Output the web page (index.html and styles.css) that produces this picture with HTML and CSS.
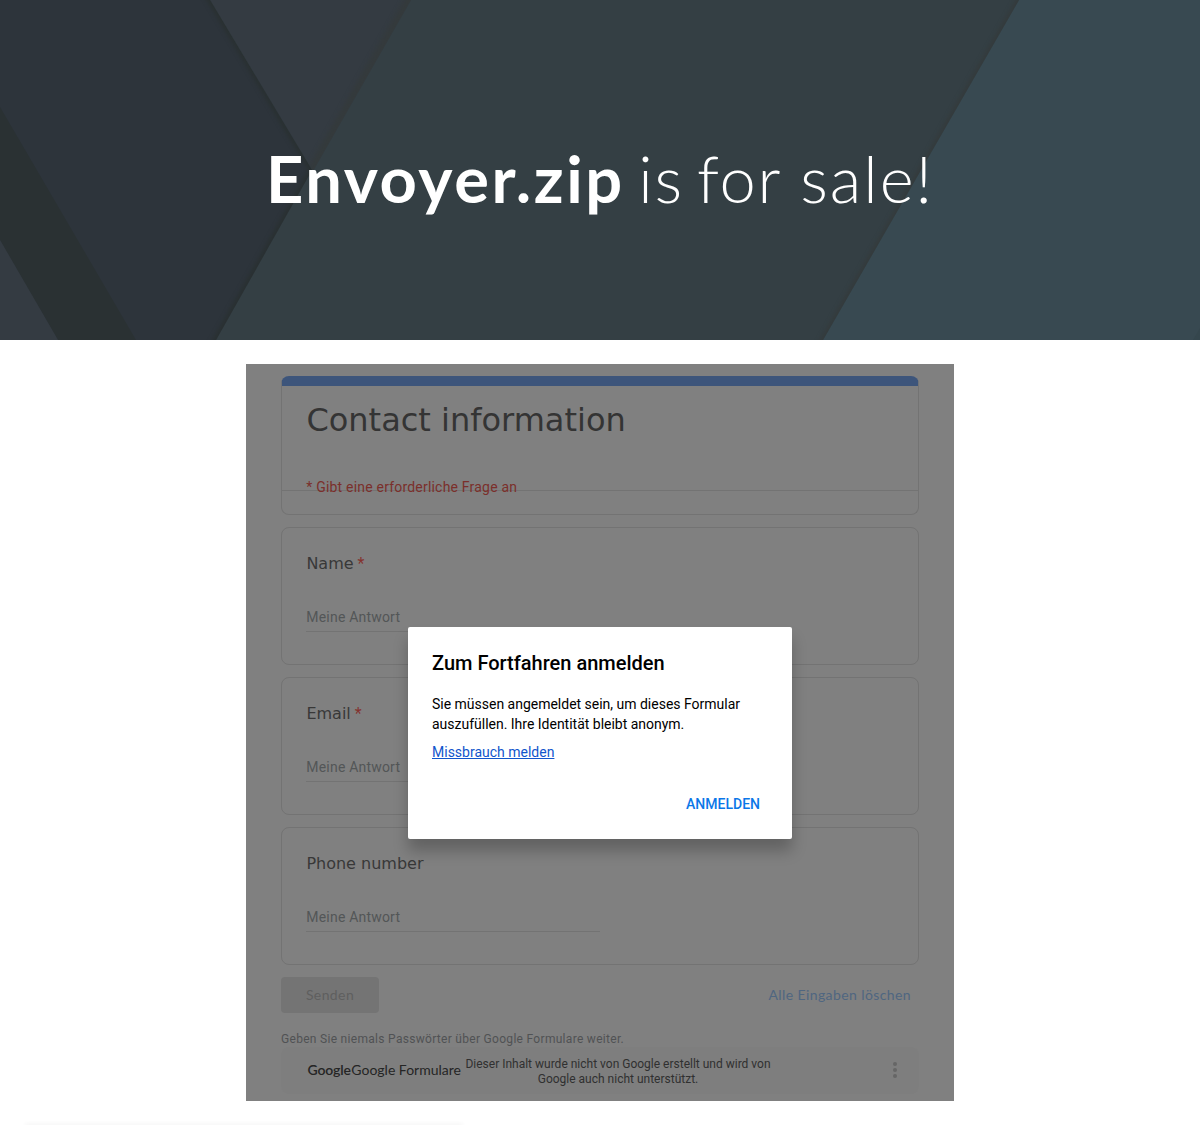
FILE: index.html
```html
<!DOCTYPE html>
<html lang="de">
<head>
<meta charset="utf-8">
<title>Envoyer.zip is for sale!</title>
<link rel="stylesheet" href="styles.css">
</head>
<body>
<header class="hero">
  <svg class="hero-art" viewBox="0 0 1200 340" preserveAspectRatio="none" aria-hidden="true">
    <defs>
      <filter id="soft" x="-20%" y="-20%" width="140%" height="140%" color-interpolation-filters="sRGB"><feGaussianBlur stdDeviation="2"/></filter>
      <clipPath id="leftclip"><path d="M0 0H210L312 170L216 340H0Z"/></clipPath>
      <clipPath id="topclip"><path d="M210 0H411L313 171Z"/></clipPath>
      <clipPath id="midclip"><path d="M411 0H1019L823 340H216Z"/></clipPath>
    </defs>
    <path fill="#343f44" d="M0 0H1200V340H0Z"/>
    <path fill="#343b42" d="M210 0H411L313 171Z"/>
    <g clip-path="url(#topclip)"><path class="edge-top" d="M415 -7L312 173"/></g>
    <path fill="#2d343b" d="M0 0H210L312 170L216 340H0Z"/>
    <g clip-path="url(#leftclip)"><path class="edge" d="M206 -7L312 170L212 347"/></g>
    <path fill="#2a3133" d="M0 107L136 340H58L0 240Z"/>
    <path fill="#343b42" d="M0 240L58 340H0Z"/>
    <path fill="#384951" d="M1019 0H1200V340H823Z"/>
    <g clip-path="url(#midclip)"><path class="edge-right" d="M1023 -7L819 347"/></g>
    <path fill="#35464d" d="M1200 328V340H1193Z"/>
  </svg>
  <h1 class="hero-title"><strong>Envoyer.zip</strong> is for <span class="hero-last">sale!</span></h1>
</header>

<main class="form-frame">
  <section class="card intro">
    <div class="intro-main">
      <h2 class="form-title">Contact information</h2>
      <p class="required-note">* Gibt eine erforderliche Frage an</p>
    </div>
  </section>
  <section class="card question">
    <h3 class="label">Name<span class="star">*</span></h3>
    <div class="answer">Meine Antwort</div>
  </section>
  <section class="card question">
    <h3 class="label">Email<span class="star">*</span></h3>
    <div class="answer">Meine Antwort</div>
  </section>
  <section class="card question">
    <h3 class="label">Phone number</h3>
    <div class="answer">Meine Antwort</div>
  </section>
  <div class="actions">
    <span class="submit">Senden</span>
    <span class="clear">Alle Eingaben löschen</span>
  </div>
  <p class="warning">Geben Sie niemals Passwörter über Google Formulare weiter.</p>
  <footer class="form-footer">
    <div class="brand"><span class="brand-google">Google</span><span class="brand-forms">Google Formulare</span></div>
    <p class="disclaimer">Dieser Inhalt wurde nicht von Google erstellt und wird von Google auch nicht unterstützt.</p>
    <svg class="more" viewBox="0 0 6 18" aria-hidden="true"><circle cx="3" cy="3" r="2"/><circle cx="3" cy="9" r="2"/><circle cx="3" cy="15" r="2"/></svg>
  </footer>
  <div class="dialog" role="dialog">
    <h2 class="dialog-title">Zum Fortfahren anmelden</h2>
    <p class="dialog-text">Sie müssen angemeldet sein, um dieses Formular auszufüllen. Ihre Identität bleibt anonym.</p>
    <a class="report">Missbrauch melden</a>
    <span class="signin">ANMELDEN</span>
  </div>
</main>
<div class="next-panel"></div>
</body>
</html>
```

FILE: styles.css
```css
* { box-sizing: border-box; }
html { overflow: hidden; }
body {
  margin: 0;
  height: 1125px;
  overflow: hidden;
  background: #fff;
  font-family: Roboto, "Liberation Sans", sans-serif;
}
h1, h2, h3, p { margin: 0; font-weight: 400; }

.hero {
  position: relative;
  display: flex;
  justify-content: center;
  height: 340px;
  padding-top: 138px;
  background: #343f44;
}
.hero-art { position: absolute; inset: 0; width: 100%; height: 100%; }
.edge, .edge-top, .edge-right { fill: none; filter: url(#soft); }
.edge { stroke: #293031; stroke-width: 6; }
.edge-top { stroke: #343a3c; stroke-width: 12; }
.edge-right { stroke: #343a3b; stroke-width: 5; }
.hero-title {
  position: relative;
  color: #fff;
  font: 300 65px/80px Lato, sans-serif;
  letter-spacing: 1.7px;
  word-spacing: -6px;
  white-space: nowrap;
}
.hero-title strong { font-weight: 700; letter-spacing: 2.6px; }
.hero-last { margin-left: 6px; letter-spacing: 2px; }

.form-frame {
  position: relative;
  width: 708px;
  height: 737px;
  margin: 24px auto 0;
  padding: 12px 35px 0;
  background: #808080;
}
.card {
  height: 138px;
  margin-bottom: 12px;
  border: 1px solid #737373;
  border-radius: 8px;
}
.intro {
  height: 139px;
  border-top: 10px solid #3d557b;
}
.intro-main {
  height: 105px;
  padding: 13px 24px 0;
  border-bottom: 1px solid #737373;
}
.form-title {
  height: 78px;
  padding-left: .4px;
  color: #343434;
  font: 32px/43px "DejaVu Sans", sans-serif;
}
.required-note {
  padding-left: .3px;
  color: #7b2f2b;
  font-size: 14px;
  line-height: 20px;
  letter-spacing: .2px;
}
.question { padding: 24px 24px 0; }
.label {
  height: 55px;
  padding-left: .4px;
  color: #383838;
  font: 16px/24px "DejaVu Sans", sans-serif;
}
.star { padding-left: 4px; color: #84332f; font-family: Roboto, sans-serif; }
.answer {
  width: 294px;
  height: 25px;
  padding-left: .3px;
  border-bottom: 1px solid #737373;
  color: #535657;
  font-size: 14px;
  line-height: 20px;
  letter-spacing: .2px;
}
.actions {
  display: flex;
  justify-content: space-between;
  align-items: center;
  height: 36px;
  padding-right: 8px;
  font: 14px/36px Lato, sans-serif;
  letter-spacing: .4px;
}
.submit {
  width: 98px;
  border-radius: 4px;
  background: #747474;
  color: #5f5f5f;
  text-align: center;
}
.clear { color: #4f6680; }
.warning {
  margin-top: 18px;
  height: 16px;
  color: #505254;
  font-size: 12px;
  line-height: 16px;
  letter-spacing: .3px;
}
.form-footer {
  display: flex;
  align-items: center;
  height: 47px;
  padding: 0 21px 0 26px;
  border-radius: 8px;
  background: #7e7e7e;
}
.brand {
  display: flex;
  width: 154px;
  padding: 0 0 2px .5px;
  color: #252525;
  font: 14px/20px Lato, sans-serif;
  white-space: nowrap;
}
.brand-google { width: 44px; font-weight: 600; letter-spacing: -.15px; }
.disclaimer {
  width: 314px;
  padding-top: 2px;
  color: #303030;
  font-size: 12px;
  line-height: 15px;
  text-align: center;
}
.more { width: 6px; height: 18px; margin: 0 0 2px auto; fill: #666; }

.dialog {
  position: absolute;
  left: 162px;
  top: 263px;
  display: flex;
  flex-direction: column;
  width: 384px;
  height: 212px;
  padding: 24px;
  border-radius: 2px;
  background: #fff;
  box-shadow: 0 12px 15px rgba(0, 0, 0, .24);
  color: #000;
  font-size: 14px;
  line-height: 20px;
}
.dialog-title { font-size: 20px; line-height: 24px; font-weight: 500; }
.dialog-text { margin-top: 19px; letter-spacing: -.01px; }
.report { margin-top: 8px; color: #1155cc; text-decoration: underline; }
.signin { margin: 32px 8px 0 0; color: #0b77e8; font-weight: 500; text-align: right; }

.next-panel {
  width: 436px;
  height: 0;
  margin: 24px 0 0 26px;
  box-shadow: 0 0 4px 1px rgba(0, 0, 0, .07);
}
```
